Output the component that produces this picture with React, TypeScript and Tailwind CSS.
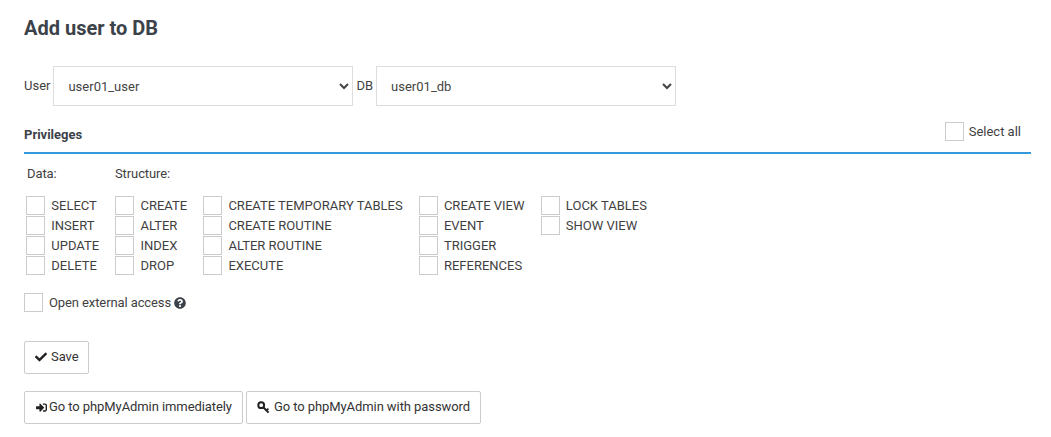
import React from 'react';
import { FaCheck, FaQuestionCircle, FaSignInAlt } from 'react-icons/fa';

const columns = [
  ['SELECT', 'INSERT', 'UPDATE', 'DELETE'],
  ['CREATE', 'ALTER', 'INDEX', 'DROP'],
  ['CREATE TEMPORARY TABLES', 'CREATE ROUTINE', 'ALTER ROUTINE', 'EXECUTE'],
  ['CREATE VIEW', 'EVENT', 'TRIGGER', 'REFERENCES'],
  ['LOCK TABLES', 'SHOW VIEW'],
];

const Box = () => (
  <span className="block w-[19px] h-[19px] shrink-0 bg-white border border-[#ccc]" />
);

const KeyIcon = () => (
  <svg viewBox="0 0 13 13" className="w-[13px] h-[13px] text-[#222]" fill="none" stroke="currentColor">
    <circle cx="4.2" cy="4.2" r="2.9" strokeWidth="2" />
    <path d="M6.5 6.5 L11.6 11.6" strokeWidth="2" />
    <path d="M9.4 9.4 L11.4 7.6" strokeWidth="1.8" />
  </svg>
);

const Btn = ({ icon, children }: { icon: React.ReactNode; children: React.ReactNode }) => (
  <button className="h-[33px] px-[10px] flex items-center gap-[4px] bg-white border border-[#ccc] rounded-[2px] text-[13px] tracking-[-0.08px] text-[#333] whitespace-nowrap">
    {icon}
    {children}
  </button>
);

export default function App() {
  return (
    <div className="min-h-[437px] bg-white pl-6 pr-5 pt-[15px] text-[13px] text-[#3f3f3f] font-['Roboto',sans-serif]">
      {/* Title */}
      <h1 className="text-[20px] leading-[26px] font-bold text-[#3c4249]">Add user to DB</h1>

      {/* User / DB */}
      <div className="mt-[25px] flex items-center">
        <label className="mr-[3px]">User</label>
        <select className="w-[300px] h-10 pl-[10px] bg-white border border-[#ddd] text-[13px] text-[#444]">
          <option>user01_user</option>
        </select>
        <label className="ml-[3px] mr-[3px]">DB</label>
        <select className="w-[300px] h-10 pl-[10px] bg-white border border-[#ddd] text-[13px] text-[#444]">
          <option>user01_db</option>
        </select>
      </div>

      {/* Privileges header */}
      <div className="mt-[16px] h-[32px] flex items-start justify-between border-b-2 border-[#3498db]">
        <b className="mt-[5px] text-[13px] leading-[16px] font-bold text-[#3c4249]">Privileges</b>
        <label className="mr-[10px] flex items-center gap-[5px]">
          <Box />
          Select all
        </label>
      </div>

      <div className="mt-[12px] ml-[3px] flex leading-[16px] tracking-[-0.1px]">
        <span className="w-[88px]">Data:</span>
        <span>Structure:</span>
      </div>

      {/* Privilege checkboxes */}
      <div className="mt-[14px] ml-[2px] flex gap-[16px]">
        {columns.map((col, i) => (
          <div key={i} className="flex flex-col gap-[1px]">
            {col.map((name) => (
              <label key={name} className="flex items-center gap-[6.3px] leading-[19px] whitespace-nowrap">
                <Box />
                {name}
              </label>
            ))}
          </div>
        ))}
      </div>

      <label className="mt-[18px] flex items-center gap-[6px] tracking-[-0.1px]">
        <Box />
        Open external access
        <FaQuestionCircle className="-ml-[3px] w-[12px] h-[12px] text-[#3c4249]" />
      </label>

      <div className="mt-[28px] flex">
        <Btn icon={<FaCheck className="w-[12px] h-[12px] text-[#222]" />}>Save</Btn>
      </div>

      <div className="mt-[17px] flex gap-[3px]">
        <Btn icon={<FaSignInAlt className="ml-[1px] -mr-[2px] w-[11px] h-[11px] text-[#222]" />}>Go to phpMyAdmin immediately</Btn>
        <Btn icon={<KeyIcon />}>Go to phpMyAdmin with password</Btn>
      </div>
    </div>
  );
}
